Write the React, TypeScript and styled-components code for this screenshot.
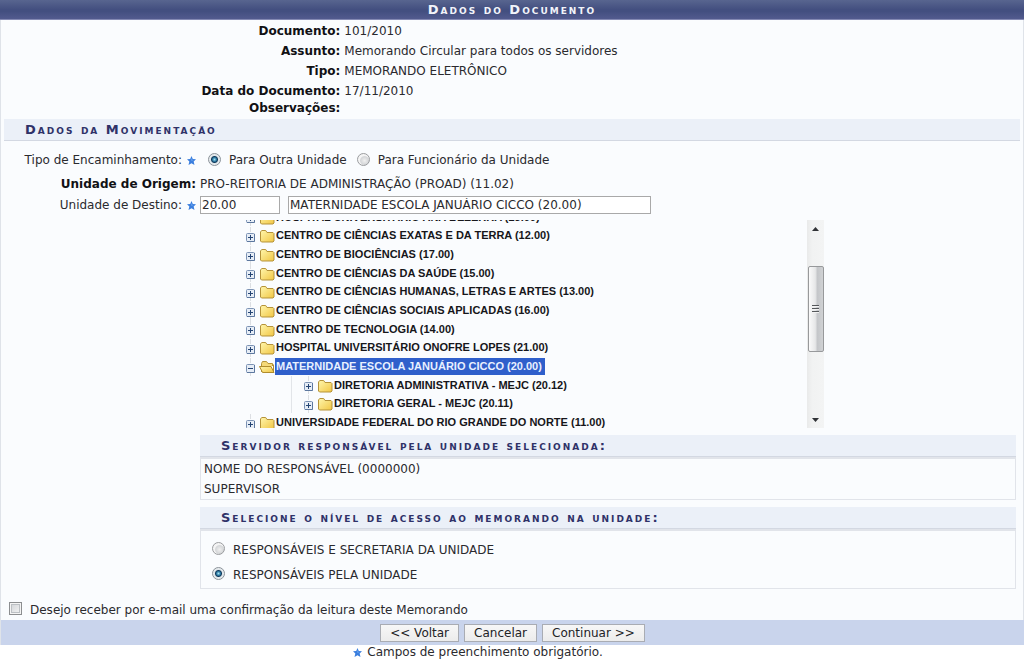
import React, { useState } from "react";
import styled, { createGlobalStyle, css } from "styled-components";

const GlobalStyle = createGlobalStyle`
  * { box-sizing: border-box; }
  body {
    margin: 0;
    background: #ffffff;
    color: #2a2a2e;
    font-family: "DejaVu Sans", Verdana, sans-serif;
    font-size: 12px;
    line-height: 16px;
  }
`;

const Frame = styled.main`
  background: #fafcfe;
  border: 0 solid #dfe3e9;
  border-width: 0 1px;
`;

const TitleBar = styled.h1`
  margin: 0 -1px;
  height: 20px;
  border-bottom: 1px solid #8489b3;
  background: linear-gradient(#58658f 0%, #434f80 50%, #434f80 60%, #525a8e 100%);
  color: #f2f4fa;
  font-size: 13px;
  line-height: 19px;
  font-variant: small-caps;
  letter-spacing: 2px;
  text-align: center;
`;

const Info = styled.dl`
  display: grid;
  grid-template-columns: 1fr 2fr;
  grid-template-rows: repeat(4, 20px) 18px;
  column-gap: 4px;
  margin: 0;
  padding: 1px 0 0;
  line-height: 20px;
`;

const InfoLabel = styled.dt`
  font-weight: bold;
  color: #111114;
  text-align: right;
`;

const ObsLabel = styled(InfoLabel)`
  line-height: 14px;
`;

const InfoValue = styled.dd`
  margin: 0;
`;

const SectionTitle = styled.h2`
  margin: 0;
  padding-left: 21px;
  height: 22px;
  border-bottom: 1px solid #d3d8e2;
  background: #ebf0f8;
  color: #2f3268;
  font-size: 13px;
  line-height: 21px;
  font-variant: small-caps;
  letter-spacing: 2px;
`;

const Section = styled.section`
  padding: 0 3px;
`;

const Fields = styled.div`
  padding-top: 7px;
`;

const Row = styled.div<{ $compact?: boolean }>`
  display: grid;
  grid-template-columns: 192px 1fr;
  column-gap: 4px;
  align-items: center;
  min-height: ${(p) => (p.$compact ? 18 : 24)}px;
`;

const FieldLabel = styled.label<{ $strong?: boolean }>`
  display: flex;
  justify-content: flex-end;
  align-items: center;
  gap: 5px;
  ${(p) =>
    p.$strong &&
    css`
      font-weight: bold;
      color: #111114;
    `}
`;

const Line = styled.div`
  display: flex;
  align-items: center;
  column-gap: 2px;
`;

const Destination = styled(Line)`
  column-gap: 8px;
`;

const StarSvg = styled.svg`
  width: 9px;
  height: 9px;
  flex: none;
`;

const Star = () => (
  <StarSvg viewBox="0 0 18 18" aria-hidden="true">
    <path d="M9 0l2.600 5.800 6.400.5-4.700 4.500L15 18l-6-3.400L3 18l1.700-7.200L0 6.300l6.400-.5z" fill="#3a7ede" />
    <path d="M9 4l1.200 3.500 3.500.6-5 1.400z" fill="#7db2f2" />
  </StarSvg>
);

const Choice = styled.label`
  display: flex;
  align-items: center;
  gap: 8px;
  padding-left: 8px;
`;

const Radio = styled.input.attrs({ type: "radio" })`
  appearance: none;
  flex: none;
  width: 13px;
  height: 13px;
  margin: 0 0 2px;
  border: 1px solid #9a9c9f;
  border-radius: 50%;
  background: radial-gradient(circle at 60% 60%, #f0f0f0 0, #d4d6d8 4px, #f4f4f4 5px);
  &:checked {
    border-color: #8a9299;
    background: radial-gradient(circle at 50% 50%, #a5e0f2 0, #2a78a0 2px, #123a5c 3px, #dfe6ea 4px, #eef1f3 6px);
  }
`;

const Check = styled.input.attrs({ type: "checkbox" })`
  appearance: none;
  flex: none;
  width: 13px;
  height: 13px;
  margin: 0 0 3px;
  border: 1px solid #8c8e90;
  background: linear-gradient(135deg, #cfd2d6, #f6f6f6);
  box-shadow: inset 0 0 0 1px #f4f4f4, inset 0 0 0 2px #bcc0c4;
  &:checked {
    background: #2a78a0;
  }
`;

const TextBox = styled.input<{ $wide?: boolean }>`
  flex: 0 1 ${(p) => (p.$wide ? 363 : 80)}px;
  min-width: 0;
  height: 18px;
  padding: 0 1px;
  border: 1px solid #a9a9a9;
  background: #ffffff;
  color: inherit;
  font: inherit;
`;

const Indented = styled.div`
  padding: 6px 0 0 196px;
`;

const Scroller = styled.div`
  display: flex;
  width: 624px;
  max-width: 100%;
  height: 208px;
  overflow: hidden;
`;

const Tree = styled.ul`
  flex: 1;
  display: grid;
  grid-template-rows: repeat(12, 1fr);
  height: 224px;
  margin: -12px 0 0;
  padding: 0 0 0 46px;
  list-style: none;
  font: bold 11px/15px "Liberation Sans", Arial, sans-serif;
  color: #16161a;
`;

const TreeItem = styled.li<{ $child: boolean }>`
  display: flex;
  align-items: center;
  min-height: 0;
  white-space: nowrap;
  ${(p) =>
    p.$child &&
    css`
      margin-left: 45px;
      padding-left: 12px;
      border-left: 1px solid #e2e5e9;
    `}
`;

const TreeLabel = styled.span<{ $selected: boolean }>`
  padding: 0 1px;
  ${(p) =>
    p.$selected &&
    css`
      padding: 1px 3px 1px 1px;
      background: #2f5fcb;
      color: #e8f0ff;
    `}
`;

const Toggle = styled.button`
  flex: none;
  display: flex;
  width: 9px;
  height: 18px;
  margin-right: 4px;
  padding: 0;
  border: 0;
  background: none;
`;

const Folder = styled.svg`
  flex: none;
  width: 16px;
  height: 15px;
`;

const ToggleIcon = ({ open }: { open: boolean }) => (
  <svg width="9" height="18" viewBox="0 0 9 18" aria-hidden="true">
    <path d="M4.500 0v5M4.500 15v3" stroke="#dcdfe3" />
    <rect x=".5" y="6.500" width="8" height="8" rx="1" fill="#e6edf6" stroke="#7c93b4" />
    <path d="M1 14.500h7.500V7" fill="none" stroke="#5d789f" />
    <path d={open ? "M2 10.500h5" : "M2 10.500h5M4.500 8v5"} stroke="#254574" />
  </svg>
);

const FolderIcon = ({ open }: { open: boolean }) => (
  <Folder viewBox="0 0 16 15" aria-hidden="true">
    <defs>
      <linearGradient id="folder" x1="0" y1="0" x2="1" y2="1">
        <stop offset="0" stopColor="#fff6ac" />
        <stop offset="1" stopColor="#f1c644" />
      </linearGradient>
    </defs>
    {open ? (
      <>
        <path d="M2.500 13V4.500l1-2h4l1.500 2h4.500V7" fill="#f5d978" stroke="#b59438" />
        <path d="M.5 7.500H12l3 6H3.500z" fill="url(#folder)" stroke="#b08c2d" />
        <path d="M14.500 5.500v8" stroke="#b08c2d" />
      </>
    ) : (
      <path
        d="M1.500 13V4l1.200-1.500h4L8 4.500h6l1 1V13l-1 1H2.500z"
        fill="url(#folder)"
        stroke="#b5933a"
      />
    )}
  </Folder>
);

const Scrollbar = styled.div`
  flex: none;
  display: flex;
  flex-direction: column;
  align-items: center;
  width: 17px;
  height: 100%;
  background: linear-gradient(90deg, #e9eaea, #f1f2f2 30%, #f3f4f4);
`;

const ScrollButton = styled.button`
  width: 17px;
  height: 17px;
  padding: 0;
  border: 0;
  background: none;
  line-height: 0;
`;

const Thumb = styled.div`
  display: flex;
  align-items: center;
  justify-content: center;
  width: 16px;
  height: 86px;
  margin-top: 29px;
  margin-bottom: auto;
  border: 1px solid #97999b;
  border-radius: 2px;
  background: linear-gradient(90deg, #fafafa, #e6e7e8 45%, #c4c6c9 60%, #d0d2d4);
`;

const Grip = styled.div`
  width: 7px;
  height: 8px;
  background: repeating-linear-gradient(#55585b 0 1px, #f2f2f2 1px 2px, transparent 2px 3px);
`;

const Panel = styled.section`
  margin: 7px 4px 0 196px;
`;

const PanelBody = styled.div`
  border: 1px solid #e1e4ea;
  border-top-width: 2px;
`;

const Responsible = styled.p`
  margin: 0;
  padding: 0 3px;
  line-height: 20px;
`;

const Levels = styled.div`
  display: grid;
  grid-auto-rows: 25px;
  padding: 6px 3px 1px;
`;

const Confirm = styled.label`
  display: flex;
  align-items: center;
  gap: 8px;
  margin-top: 12px;
  padding: 0 8px 1px;
  height: 19px;
`;

const Actions = styled.div`
  display: flex;
  justify-content: center;
  align-items: center;
  gap: 5px;
  height: 25px;
  margin-right: -1px;
  background: #c9d4ec;
`;

const ActionButton = styled.button`
  height: 18px;
  padding: 0 9px;
  border: 1px solid #a9acb3;
  background: linear-gradient(#f7f7f7, #ececec);
  color: #222226;
  font: inherit;
  line-height: 16px;
`;

const Note = styled.p`
  display: flex;
  justify-content: center;
  align-items: center;
  gap: 5px;
  margin: 0;
  padding-right: 68px;
  line-height: 14px;
`;

const info: [string, string][] = [
  ["Documento:", "101/2010"],
  ["Assunto:", "Memorando Circular para todos os servidores"],
  ["Tipo:", "MEMORANDO ELETRÔNICO"],
  ["Data do Documento:", "17/11/2010"],
];

type UnitNode = { name: string; child?: boolean; selected?: boolean };

const units: UnitNode[] = [
  { name: "HOSPITAL UNIVERSITÁRIO ANA BEZERRA (23.00)" },
  { name: "CENTRO DE CIÊNCIAS EXATAS E DA TERRA (12.00)" },
  { name: "CENTRO DE BIOCIÊNCIAS (17.00)" },
  { name: "CENTRO DE CIÊNCIAS DA SAÚDE (15.00)" },
  { name: "CENTRO DE CIÊNCIAS HUMANAS, LETRAS E ARTES (13.00)" },
  { name: "CENTRO DE CIÊNCIAS SOCIAIS APLICADAS (16.00)" },
  { name: "CENTRO DE TECNOLOGIA (14.00)" },
  { name: "HOSPITAL UNIVERSITÁRIO ONOFRE LOPES (21.00)" },
  { name: "MATERNIDADE ESCOLA JANUÁRIO CICCO (20.00)", selected: true },
  { name: "DIRETORIA ADMINISTRATIVA - MEJC (20.12)", child: true },
  { name: "DIRETORIA GERAL - MEJC (20.11)", child: true },
  { name: "UNIVERSIDADE FEDERAL DO RIO GRANDE DO NORTE (11.00)" },
];

export default function App() {
  const [target, setTarget] = useState("unit");
  const [level, setLevel] = useState("unit");

  return (
    <>
      <GlobalStyle />
      <Frame>
        <TitleBar>Dados do Documento</TitleBar>
        <Info>
          {info.map(([label, value]) => (
            <React.Fragment key={label}>
              <InfoLabel>{label}</InfoLabel>
              <InfoValue>{value}</InfoValue>
            </React.Fragment>
          ))}
          <ObsLabel>Observações:</ObsLabel>
          <InfoValue />
        </Info>

        <Section>
          <SectionTitle>Dados da Movimentação</SectionTitle>
          <Fields>
            <Row role="radiogroup" aria-labelledby="forward-type">
              <FieldLabel as="span" id="forward-type">
                Tipo de Encaminhamento: <Star />
              </FieldLabel>
              <Line>
                <Choice>
                  <Radio name="target" checked={target === "unit"} onChange={() => setTarget("unit")} />
                  Para Outra Unidade
                </Choice>
                <Choice>
                  <Radio name="target" checked={target === "staff"} onChange={() => setTarget("staff")} />
                  Para Funcionário da Unidade
                </Choice>
              </Line>
            </Row>
            <Row>
              <FieldLabel as="span" $strong>
                Unidade de Origem:
              </FieldLabel>
              <span>PRO-REITORIA DE ADMINISTRAÇÃO (PROAD) (11.02)</span>
            </Row>
            <Row $compact>
              <FieldLabel htmlFor="unit-code">
                Unidade de Destino: <Star />
              </FieldLabel>
              <Destination>
                <TextBox id="unit-code" defaultValue="20.00" />
                <TextBox $wide aria-label="Unidade de Destino" defaultValue="MATERNIDADE ESCOLA JANUÁRIO CICCO (20.00)" />
              </Destination>
            </Row>
          </Fields>

          <Indented>
            <Scroller>
              <Tree role="tree">
                {units.map(({ name, child = false, selected = false }) => (
                  <TreeItem key={name} $child={child} role="treeitem" aria-level={child ? 2 : 1} aria-selected={selected}>
                    <Toggle type="button" aria-label={name} aria-expanded={selected}>
                      <ToggleIcon open={selected} />
                    </Toggle>
                    <FolderIcon open={selected} />
                    <TreeLabel $selected={selected}>{name}</TreeLabel>
                  </TreeItem>
                ))}
              </Tree>
              <Scrollbar>
                <ScrollButton type="button" aria-label="Acima">
                  <svg width="7" height="4" viewBox="0 0 7 4">
                    <path d="M0 4L3.500 0 7 4z" fill="#303236" />
                  </svg>
                </ScrollButton>
                <Thumb>
                  <Grip />
                </Thumb>
                <ScrollButton type="button" aria-label="Abaixo">
                  <svg width="7" height="4" viewBox="0 0 7 4">
                    <path d="M0 0h7L3.500 4z" fill="#303236" />
                  </svg>
                </ScrollButton>
              </Scrollbar>
            </Scroller>
          </Indented>

          <Panel>
            <SectionTitle>Servidor responsável pela unidade selecionada:</SectionTitle>
            <PanelBody>
              <Responsible>NOME DO RESPONSÁVEL (0000000)</Responsible>
              <Responsible>SUPERVISOR</Responsible>
            </PanelBody>
          </Panel>
          <Panel>
            <SectionTitle>Selecione o nível de acesso ao memorando na unidade:</SectionTitle>
            <PanelBody>
              <Levels>
                <Choice>
                  <Radio name="level" checked={level === "office"} onChange={() => setLevel("office")} />
                  RESPONSÁVEIS E SECRETARIA DA UNIDADE
                </Choice>
                <Choice>
                  <Radio name="level" checked={level === "unit"} onChange={() => setLevel("unit")} />
                  RESPONSÁVEIS PELA UNIDADE
                </Choice>
              </Levels>
            </PanelBody>
          </Panel>
        </Section>

        <Confirm>
          <Check />
          Desejo receber por e-mail uma confirmação da leitura deste Memorando
        </Confirm>
        <Actions>
          <ActionButton type="button">&lt;&lt; Voltar</ActionButton>
          <ActionButton type="button">Cancelar</ActionButton>
          <ActionButton type="submit">Continuar &gt;&gt;</ActionButton>
        </Actions>
      </Frame>
      <Note>
        <Star /> Campos de preenchimento obrigatório.
      </Note>
    </>
  );
}
